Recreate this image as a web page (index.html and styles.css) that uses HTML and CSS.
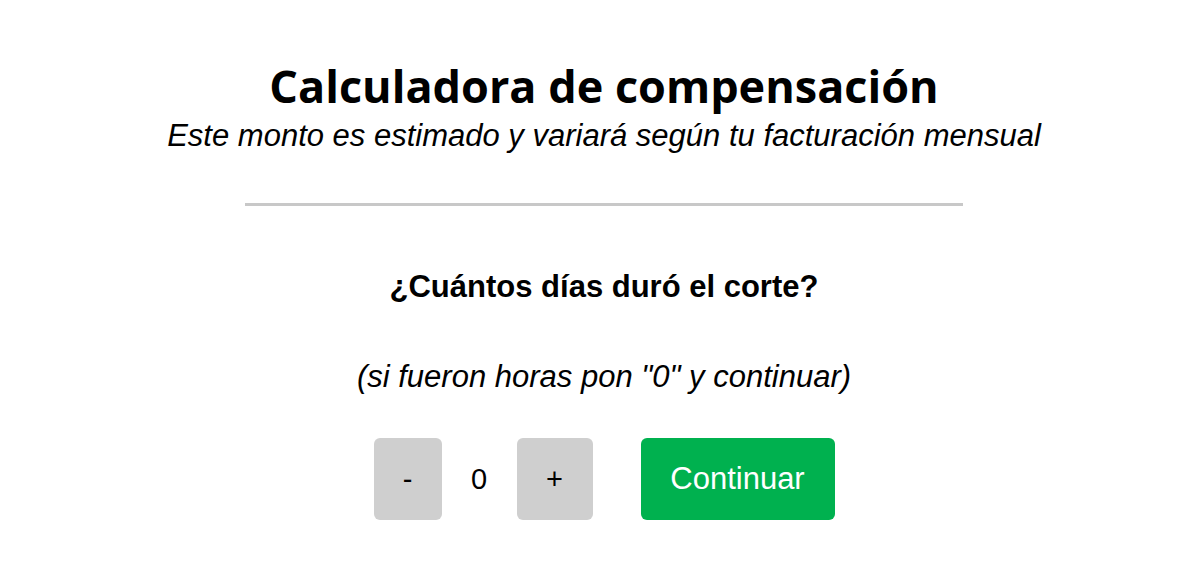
FILE: index.html
```html
<!DOCTYPE html>
<html lang="es">
<head>
<meta charset="utf-8">
<link rel="stylesheet" href="styles.css">
</head>
<body>
<main class="calc">
  <header class="head">
    <h1 class="title">Calculadora de compensación</h1>
    <p class="subtitle">Este monto es estimado y variará según tu facturación mensual</p>
  </header>
  <hr class="divider">
  <section class="step">
    <h2 class="question">¿Cuántos días duró el corte?</h2>
    <p class="note">(si fueron horas pon "0" y continuar)</p>
    <div class="controls">
      <button class="btn-step btn-minus">-</button>
      <span class="value">0</span>
      <button class="btn-step btn-plus">+</button>
      <button class="btn-continue">Continuar</button>
    </div>
  </section>
</main>
</body>
</html>
```
FILE: styles.css
```css
html, body {
  margin: 0;
  padding: 0;
  background: #ffffff;
}
body {
  font-family: "Liberation Sans", Arial, sans-serif;
  color: #000;
}
.calc {
  display: flex;
  flex-direction: column;
  align-items: center;
  padding-top: 58px;
  padding-left: 8px;
}
.head {
  text-align: center;
}
.title {
  font-family: "Open Sans", sans-serif;
  font-weight: 700;
  font-size: 45px;
  line-height: 56px;
  margin: 0;
}
.subtitle {
  font-style: italic;
  font-size: 31px;
  line-height: 36px;
  margin: 4px 0 0;
}
.divider {
  width: 718px;
  height: 3px;
  border: 0;
  background: #c8c8c8;
  margin: 49px 0 0;
}
.step {
  display: flex;
  flex-direction: column;
  align-items: center;
  margin-top: 63px;
}
.question {
  font-size: 31px;
  font-weight: 700;
  line-height: 36px;
  margin: 0;
}
.note {
  font-size: 31px;
  font-style: italic;
  line-height: 36px;
  margin: 54px 0 0;
}
.controls {
  display: flex;
  align-items: center;
  margin-top: 43px;
}
.btn-step {
  height: 82px;
  border: 0;
  border-radius: 6px;
  background: #cfcfcf;
  font-family: "Liberation Sans", Arial, sans-serif;
  font-size: 29px;
  color: #000;
  padding: 0;
}
.btn-minus { width: 68px; }
.btn-plus { width: 76px; }
.value {
  font-size: 29px;
  width: 75px;
  text-align: center;
}
.btn-continue {
  margin-left: 48px;
  width: 194px;
  height: 82px;
  border: 0;
  border-radius: 6px;
  background: #00b14f;
  color: #fff;
  font-family: "Liberation Sans", Arial, sans-serif;
  font-size: 31px;
  padding: 0;
}
```
